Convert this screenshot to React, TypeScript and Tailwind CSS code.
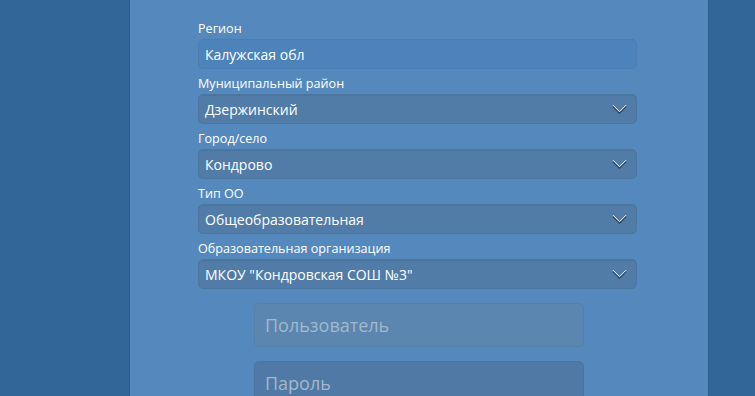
import type { ReactNode } from 'react';

// Login form fragment: school selection + credentials

const font = { fontFamily: '"Open Sans", "Noto Sans", sans-serif' };

function Chevron() {
  return (
    <svg width="15" height="10" viewBox="0 0 15 10" className="shrink-0">
      <polyline points="1,1.8 7.5,8.3 14,1.8" fill="none" stroke="#2c4a68" strokeWidth="1.5" transform="translate(0,0.8)" />
      <polyline points="1,1.2 7.5,7.7 14,1.2" fill="none" stroke="#ffffff" strokeWidth="1" />
    </svg>
  );
}

function Field({ label, children }: { label: string; children: ReactNode }) {
  return (
    <div className="flex flex-col">
      <label className="text-[12.6px] leading-[18px] text-white mt-[6px] mb-[1px]">{label}</label>
      {children}
    </div>
  );
}

function Select({ value }: { value: string }) {
  return (
    <div className="h-[30px] flex items-center justify-between pl-[6px] pr-[9px] rounded-[5px] bg-[#517ca7] border border-[#4c76a0] shadow-[inset_0_1px_1px_rgba(0,0,0,0.06)]">
      <span className="text-[14px] text-white">{value}</span>
      <Chevron />
    </div>
  );
}

export default function App() {
  const selects = [
    { label: 'Муниципальный район', value: 'Дзержинский' },
    { label: 'Город/село', value: 'Кондрово' },
    { label: 'Тип ОО', value: 'Общеобразовательная' },
    { label: 'Образовательная организация', value: 'МКОУ "Кондровская СОШ №3"' },
  ];

  return (
    <div className="w-[755px] h-[396px] overflow-hidden bg-[#326699] flex" style={font}>
      <div className="ml-[129px] w-[580px] h-full bg-[#5589bd] border-x border-[#2f5f8e]">
        <div className="ml-[68px] w-[439px] pt-[14px] flex flex-col">
          <Field label="Регион">
            <div className="h-[30px] flex items-center pl-[6px] rounded-[5px] bg-[#4c83ba] border border-[#4a7db1]">
              <span className="text-[14px] text-white">Калужская обл</span>
            </div>
          </Field>
          {selects.map((s) => (
            <Field key={s.label} label={s.label}>
              <Select value={s.value} />
            </Field>
          ))}

          <div className="ml-[56px] w-[330px] flex flex-col gap-[14px] mt-[14px]">
            <input
              readOnly
              placeholder="Пользователь"
              className="h-[44px] px-[10px] rounded-[5px] bg-[#5a86b0] border border-[#5480aa] text-[18px] placeholder:text-[#a3b8cd] outline-none"
            />
            <input
              readOnly
              type="password"
              placeholder="Пароль"
              className="h-[44px] px-[10px] rounded-[5px] bg-[#5079a5] border border-[#4b74a0] text-[18px] placeholder:text-[#a3b8cd] outline-none"
            />
          </div>
        </div>
      </div>
    </div>
  );
}
